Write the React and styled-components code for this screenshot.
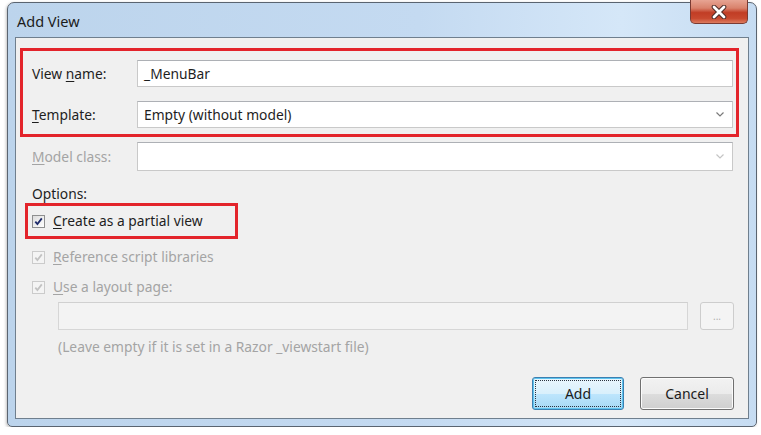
import React from "react";
import styled, { createGlobalStyle } from "styled-components";

const GlobalStyle = createGlobalStyle`
    body {
        margin: 0;
        background: #ffffff;
        font-family: "Noto Sans", "Open Sans", sans-serif;
        font-size: 13.8px;
        color: #1e1e1e;
    }
`;

const Page = styled.div`
    padding: 2px 0 0 7px;
`;

const Window = styled.div`
    box-sizing: border-box;
    width: 750px;
    height: 425px;
    display: flex;
    flex-direction: column;
    padding: 0 7px 7px 7px;
    border: 1px solid #5a6470;
    border-radius: 7px 7px 5px 5px;
    background: linear-gradient(90deg, #bcd4ec 0%, #c4daf1 55%, #d5e7f8 82%, #c6dcf2 100%);
    box-shadow: -1px 1px 3px rgba(0, 0, 0, 0.25);
`;

const TitleBar = styled.div`
    height: 34px;
    display: flex;
    justify-content: space-between;
    align-items: center;
    padding-left: 2px;
`;

const Title = styled.span`
    font-size: 14.5px;
    color: #1b1b1b;
    margin-top: 2px;
`;

const CloseButton = styled.div`
    align-self: flex-start;
    margin-top: -3px;
    margin-right: 1px;
    width: 58px;
    height: 24px;
    box-sizing: border-box;
    border: 1px solid #7a3b33;
    border-top: none;
    border-radius: 0 0 5px 5px;
    background: linear-gradient(#e7a493 0%, #d9826c 35%, #c13d25 55%, #c8492f 80%, #dd7b5f 100%);
    display: flex;
    align-items: center;
    justify-content: center;
`;

const Content = styled.div`
    flex: 1;
    display: flex;
    flex-direction: column;
    border: 1px solid #6f7f8e;
    background: #f0f0f0;
    padding: 10px 15px 8px 16px;
`;

const Highlight = styled.div`
    border: 3px solid #e3242b;
    box-sizing: border-box;
`;

const FieldBox = styled(Highlight)`
    margin: 0 -6px 0 -12px;
    padding: 9px 3px 6px 9px;
    display: flex;
    flex-direction: column;
    gap: 14px;
`;

const Row = styled.div`
    display: flex;
    align-items: center;
    margin-top: ${(p) => p.$top || 0}px;
`;

const Label = styled.span`
    width: 105px;
    flex-shrink: 0;
    color: ${(p) => (p.$disabled ? "#a4a4a4" : "#1e1e1e")};
`;

const Key = styled.span`
    text-decoration: underline;
    text-underline-offset: 2px;
    text-decoration-thickness: 1px;
`;

const TextBox = styled.div`
    flex: 1;
    box-sizing: border-box;
    height: ${(p) => p.$h || 27}px;
    display: flex;
    align-items: center;
    padding: 0 8px 0 6px;
    background: ${(p) => (p.$disabled ? "#f3f3f3" : "#ffffff")};
    border: 1px solid ${(p) => (p.$disabled ? "#d6d6d6" : "#c9c9c9")};
    border-top-color: ${(p) => (p.$disabled ? "#d0d0d0" : "#adb0b5")};
    color: #1e1e1e;
`;

const Value = styled.span`
    flex: 1;
`;

const Chevron = ({ color }) => (
    <svg width="8" height="5" viewBox="0 0 8 5">
        <path d="M0.5 0.5 L4 4 L7.5 0.5" fill="none" stroke={color} strokeWidth="1.2" />
    </svg>
);

const Caption = styled.div`
    margin-top: ${(p) => p.$top || 0}px;
    line-height: 18px;
    color: ${(p) => (p.$muted ? "#a4a4a4" : "#1e1e1e")};
    margin-left: ${(p) => p.$indent || 0}px;
`;

const CheckBox = styled(Highlight)`
    width: 213px;
    margin: 0 0 0 -7px;
    padding: 6px 0 6px 4px;
`;

const CheckRow = styled.label`
    display: flex;
    align-items: center;
    gap: 8px;
    line-height: 18px;
    margin-top: ${(p) => p.$top || 0}px;
    color: ${(p) => (p.$disabled ? "#a4a4a4" : "#1e1e1e")};
`;

const Box = styled.span`
    width: 13px;
    height: 13px;
    box-sizing: border-box;
    display: flex;
    align-items: center;
    justify-content: center;
    border: 1px solid ${(p) => (p.$disabled ? "#cbcbcb" : "#8e8f8f")};
    background: ${(p) =>
        p.$disabled ? "#f4f4f4" : "linear-gradient(135deg, #dcdcdc, #ffffff)"};
`;

const Tick = ({ color }) => (
    <svg width="9" height="9" viewBox="0 0 9 9">
        <path d="M1.3 4.6 L3.4 7 L7.8 1.4" fill="none" stroke={color} strokeWidth="1.8" />
    </svg>
);

const PathRow = styled.div`
    display: flex;
    align-items: center;
    gap: 12px;
    margin: 6px 0 0 26px;
`;

const SmallButton = styled.div`
    width: 34px;
    height: 28px;
    box-sizing: border-box;
    border: 1px solid #cdcdcd;
    border-radius: 3px;
    background: #f4f4f4;
    color: #b0b0b0;
    font-size: 10px;
    display: flex;
    align-items: center;
    justify-content: center;
    margin-right: -1px;
`;

const Footer = styled.div`
    margin-top: auto;
    display: flex;
    justify-content: flex-end;
    gap: 16px;
    margin-right: -1px;
`;

const Button = styled.div`
    width: ${(p) => p.$w}px;
    height: 33px;
    box-sizing: border-box;
    border-radius: 3px;
    padding: 2px;
    display: flex;
    border: 1px solid ${(p) => (p.$primary ? "#3c7fb1" : "#707070")};
    background: ${(p) =>
        p.$primary
            ? "linear-gradient(#eaf6fd 0%, #d9f0fc 50%, #bee6fd 50%, #a7d9f5 100%)"
            : "linear-gradient(#f2f2f2 0%, #ebebeb 50%, #dddddd 50%, #cfcfcf 100%)"};
    box-shadow: ${(p) => (p.$primary ? "inset 0 0 0 1px #5fc4ee" : "inset 0 0 0 1px #fbfbfb")};
`;

const ButtonFace = styled.span`
    flex: 1;
    display: flex;
    align-items: center;
    justify-content: center;
    border: 1px dotted ${(p) => (p.$focus ? "#2a3440" : "transparent")};
    font-size: 14px;
    color: #1b1b1b;
`;

export default function App() {
    return (
        <>
            <GlobalStyle />
            <Page>
                <Window>
                    <TitleBar>
                        <Title>Add View</Title>
                        <CloseButton>
                            <svg width="16" height="14" viewBox="0 0 16 14">
                                <path
                                    d="M3 2 L13 12 M13 2 L3 12"
                                    stroke="#4a2a26"
                                    strokeWidth="4.6"
                                    strokeLinecap="round"
                                />
                                <path
                                    d="M3 2 L13 12 M13 2 L3 12"
                                    stroke="#ffffff"
                                    strokeWidth="2.8"
                                    strokeLinecap="round"
                                />
                            </svg>
                        </CloseButton>
                    </TitleBar>
                    <Content>
                        <FieldBox>
                            <Row>
                                <Label>
                                    View <Key>n</Key>ame:
                                </Label>
                                <TextBox>
                                    <Value>_MenuBar</Value>
                                </TextBox>
                            </Row>
                            <Row>
                                <Label>
                                    <Key>T</Key>emplate:
                                </Label>
                                <TextBox>
                                    <Value>Empty (without model)</Value>
                                    <Chevron color="#7a7a7a" />
                                </TextBox>
                            </Row>
                        </FieldBox>
                        <Row $top={5}>
                            <Label $disabled>
                                <Key>M</Key>odel class:
                            </Label>
                            <TextBox $h={29}>
                                <Value />
                                <Chevron color="#c4c4c4" />
                            </TextBox>
                        </Row>
                        <Caption $top={14}>Options:</Caption>
                        <CheckBox>
                            <CheckRow>
                                <Box>
                                    <Tick color="#1e2b6a" />
                                </Box>
                                <span>
                                    <Key>C</Key>reate as a partial view
                                </span>
                            </CheckRow>
                        </CheckBox>
                        <CheckRow $disabled $top={9}>
                            <Box $disabled>
                                <Tick color="#c2c2c2" />
                            </Box>
                            <span>
                                <Key>R</Key>eference script libraries
                            </span>
                        </CheckRow>
                        <CheckRow $disabled $top={12}>
                            <Box $disabled>
                                <Tick color="#c2c2c2" />
                            </Box>
                            <span>
                                <Key>U</Key>se a layout page:
                            </span>
                        </CheckRow>
                        <PathRow>
                            <TextBox $disabled $h={28} />
                            <SmallButton>...</SmallButton>
                        </PathRow>
                        <Caption $muted $top={8} $indent={26}>
                            (Leave empty if it is set in a Razor _viewstart file)
                        </Caption>
                        <Footer>
                            <Button $primary $w={92}>
                                <ButtonFace $focus>Add</ButtonFace>
                            </Button>
                            <Button $w={94}>
                                <ButtonFace>Cancel</ButtonFace>
                            </Button>
                        </Footer>
                    </Content>
                </Window>
            </Page>
        </>
    );
}
